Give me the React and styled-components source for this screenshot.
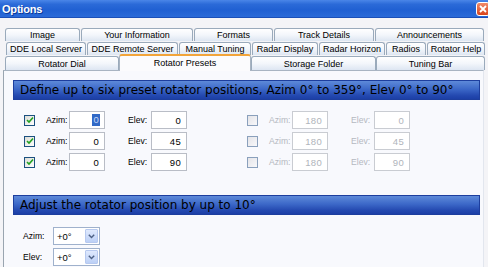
import React from 'react';
import styled, { createGlobalStyle } from 'styled-components';

const GlobalStyle = createGlobalStyle`
  html, body {
    margin: 0;
    padding: 0;
    background: #f4f4f7;
    overflow: hidden;
  }
  * { box-sizing: border-box; }
`;

const Window = styled.div`
  width: 488px;
  height: 267px;
  overflow: hidden;
  font-family: "Liberation Sans", Arial, sans-serif;
  background: #f4f4f7;
`;

const TitleBar = styled.div`
  height: 18px;
  display: flex;
  align-items: center;
  justify-content: space-between;
  padding: 0 0 0 2px;
  background: linear-gradient(#4a86e8 0%, #2b6ad8 25%, #2060d2 60%, #2a6ad8 100%);
  border-bottom: 1px solid #1a4fb8;
`;

const Title = styled.span`
  color: #fff;
  font-weight: bold;
  font-size: 11px;
  letter-spacing: -0.2px;
  text-shadow: 1px 1px 0 #0b3a9a;
`;

const CloseButton = styled.div`
  width: 14px;
  height: 14px;
  margin-right: -2px;
  border: 1px solid #fff;
  border-radius: 3px;
  background: linear-gradient(#f08a6a, #d8441c);
  display: flex;
  align-items: center;
  justify-content: center;
`;

const Tabs = styled.div`
  margin-top: 10px;
  display: flex;
  flex-direction: column;
  gap: 1px;
  position: relative;
  z-index: 2;
`;

const TabRow = styled.div`
  display: flex;
  align-items: flex-end;
  gap: ${({ $gap }) => $gap}px;
  height: ${({ $h }) => $h}px;
  padding-left: ${({ $left }) => $left}px;
`;

const Tab = styled.div`
  flex: none;
  height: 100%;
  display: flex;
  align-items: center;
  justify-content: center;
  font-size: 9px;
  color: #000;
  border: 1px solid #9aaabb;
  border-bottom: none;
  border-radius: 3px 3px 0 0;
  background: linear-gradient(#ffffff, #f3f6fb 50%, #dde6f2);
  white-space: nowrap;
`;

const ActiveTab = styled(Tab)`
  height: 17px;
  margin-bottom: -1px;
  align-items: flex-start;
  padding-top: 2px;
  background: #fbfbfd;
  border-color: #a8b4c2;
  border-top: 2px solid #f2a43a;
`;

const Panel = styled.div`
  margin-left: 3px;
  width: 481px;
  height: 200px;
  background: #f8f9fd;
  border-top: 1px solid #a8b4c2;
  border-left: 1px solid #9aa5b0;
  border-right: 1px solid #e2e6ee;
  padding: 9px 3px 0 9px;
`;

const SectionHeader = styled.div`
  height: 20px;
  margin-top: ${({ $top }) => $top || 0}px;
  display: flex;
  align-items: center;
  padding-left: 6px;
  font-family: "DejaVu Sans", Verdana, sans-serif;
  font-size: 12px;
  color: #000;
  background: linear-gradient(#5e8ad9 0%, #3c68c8 45%, #2449b0 80%, #1c3fa6 100%);
  border: 1px solid #1d3e9e;
`;

const PresetGrid = styled.div`
  margin: 11px 0 0 11px;
  display: grid;
  grid-template-columns: 163px 163px;
  column-gap: 60px;
  row-gap: 3px;
`;

const PresetRow = styled.div`
  display: grid;
  grid-template-columns: 22px 23px 59px 23px 36px;
  align-items: center;
  height: 18px;
  font-size: 8.6px;
  color: ${({ $disabled }) => ($disabled ? '#b4b8c0' : '#000')};
`;

const Check = styled.div`
  width: 11px;
  height: 11px;
  border: 1px solid ${({ $disabled }) => ($disabled ? '#8aa0bc' : '#1c5180')};
  background: ${({ $disabled }) =>
    $disabled ? 'linear-gradient(135deg, #e4e4e8, #f8f8fa)' : 'linear-gradient(135deg, #dcdcd6, #ffffff)'};
  display: flex;
  align-items: center;
  justify-content: center;
`;

const Field = styled.div`
  width: 36px;
  height: 18px;
  display: flex;
  align-items: center;
  justify-content: flex-end;
  padding-right: 5px;
  font-size: 9.5px;
  letter-spacing: 0.3px;
  background: #fff;
  border: 1px solid ${({ $disabled }) => ($disabled ? '#c9ccd2' : '#b9bdc6')};
  color: ${({ $disabled }) => ($disabled ? '#b0b4bb' : '#000')};
`;

const Selected = styled.span`
  background: #3169c6;
  color: #c8d8f8;
  padding: 0 1px;
  margin-right: -1px;
  line-height: 12px;
`;

const AdjustList = styled.div`
  margin: 12px 0 0 10px;
  display: flex;
  flex-direction: column;
  gap: 3px;
`;

const AdjustRow = styled.div`
  display: grid;
  grid-template-columns: 30px 47px;
  align-items: center;
  height: 18px;
  font-size: 8.6px;
`;

const Select = styled.div`
  height: 18px;
  display: flex;
  align-items: stretch;
  background: #fff;
  border: 1px solid #9fb1cc;
`;

const SelectValue = styled.div`
  flex: 1;
  display: flex;
  align-items: center;
  padding-left: 3px;
  font-size: 9.5px;
`;

const SelectButton = styled.div`
  width: 13px;
  display: flex;
  align-items: center;
  justify-content: center;
  margin: 1px;
  border: 1px solid #b7c9ef;
  border-radius: 1px;
  background: linear-gradient(#dfe9fd, #bcd0f6);
`;

const tabRows = [
  { left: 5, h: 13, gap: 1, tabs: [['Image', 75], ['Your Information', 112], ['Formats', 79], ['Track Details', 100], ['Announcements', 109]] },
  { left: 6, h: 13, gap: 1, tabs: [['DDE Local Server', 80], ['DDE Remote Server', 91], ['Manual Tuning', 72], ['Radar Display', 66], ['Radar Horizon', 66], ['Radios', 40], ['Rotator Help', 58]] },
  { left: 5, h: 14, gap: 0, tabs: [['Rotator Dial', 114], ['Rotator Presets', 132, true], ['Storage Folder', 125], ['Tuning Bar', 109]] },
];

const presets = [
  [{ on: true, azim: '0', elev: '0', sel: true }, { on: false, azim: '180', elev: '0' }],
  [{ on: true, azim: '0', elev: '45' }, { on: false, azim: '180', elev: '45' }],
  [{ on: true, azim: '0', elev: '90' }, { on: false, azim: '180', elev: '90' }],
];

const CheckMark = () => (
  <svg width="8" height="8" viewBox="0 0 8 8">
    <path d="M1 4 L3 6 L7 1.5" fill="none" stroke="#21a121" strokeWidth="1.6" />
  </svg>
);

const Chevron = () => (
  <svg width="7" height="5" viewBox="0 0 7 5">
    <path d="M0.8 0.8 L3.5 3.6 L6.2 0.8" fill="none" stroke="#4d6185" strokeWidth="1.4" />
  </svg>
);

const Preset = ({ p }) => {
  const off = !p.on;
  return (
    <PresetRow $disabled={off}>
      <Check $disabled={off}>{p.on && <CheckMark />}</Check>
      <span>Azim:</span>
      <Field $disabled={off}>{p.sel ? <Selected>{p.azim}</Selected> : p.azim}</Field>
      <span>Elev:</span>
      <Field $disabled={off}>{p.elev}</Field>
    </PresetRow>
  );
};

const App = () => (
  <Window>
    <GlobalStyle />
    <TitleBar>
      <Title>Options</Title>
      <CloseButton>
        <svg width="8" height="8" viewBox="0 0 8 8">
          <path d="M1 1 L7 7 M7 1 L1 7" stroke="#fff" strokeWidth="1.8" />
        </svg>
      </CloseButton>
    </TitleBar>
    <Tabs>
      {tabRows.map((row, i) => (
        <TabRow key={i} $left={row.left} $h={row.h} $gap={row.gap}>
          {row.tabs.map(([label, w, active]) =>
            active ? (
              <ActiveTab key={label} style={{ width: w }}>{label}</ActiveTab>
            ) : (
              <Tab key={label} style={{ width: w }}>{label}</Tab>
            )
          )}
        </TabRow>
      ))}
    </Tabs>
    <Panel>
      <SectionHeader>Define up to six preset rotator positions, Azim 0° to 359°, Elev 0° to 90°</SectionHeader>
      <PresetGrid>
        {presets.flat().map((p, i) => (
          <Preset key={i} p={p} />
        ))}
      </PresetGrid>
      <SectionHeader $top={24}>Adjust the rotator position by up to 10°</SectionHeader>
      <AdjustList>
        {['Azim:', 'Elev:'].map((label) => (
          <AdjustRow key={label}>
            <span>{label}</span>
            <Select>
              <SelectValue>+0°</SelectValue>
              <SelectButton>
                <Chevron />
              </SelectButton>
            </Select>
          </AdjustRow>
        ))}
      </AdjustList>
    </Panel>
  </Window>
);

export default App;
